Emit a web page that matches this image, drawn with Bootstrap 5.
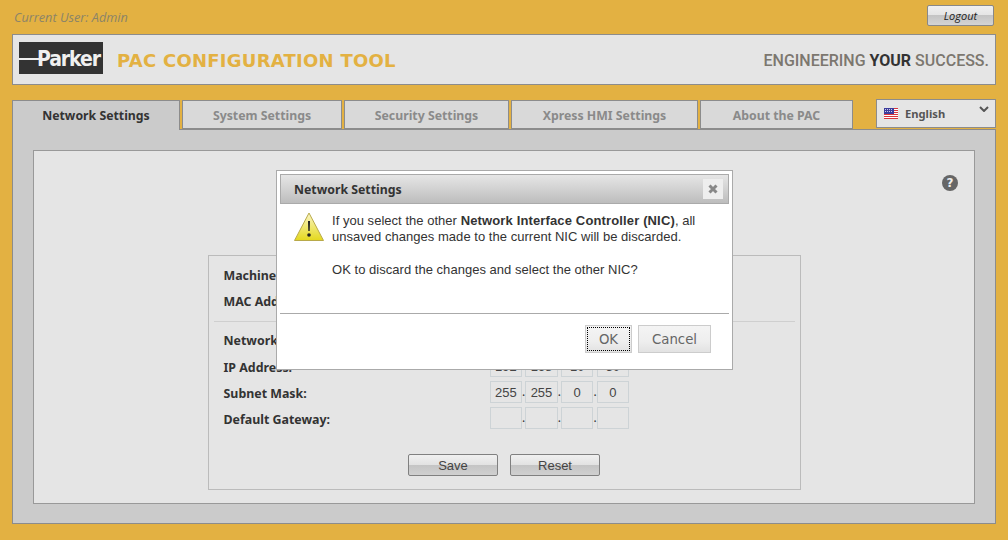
<!DOCTYPE html>
<html lang="en">
<head>
  <meta charset="UTF-8">
  <meta name="viewport" content="width=device-width, initial-scale=1.0">
  <title>PAC Configuration Tool</title>
  <link href="https://cdn.jsdelivr.net/npm/bootstrap@5.3.3/dist/css/bootstrap.min.css" rel="stylesheet">
  <script src="https://cdn.jsdelivr.net/npm/bootstrap@5.3.3/dist/js/bootstrap.bundle.min.js"></script>
  <style>
    html, body { height: 540px; overflow: hidden; }
    body {
      background: #e3b142;
      padding: 0 12px;
      font-family: "Liberation Sans", Arial, sans-serif;
      color: #333;
      position: relative;
    }
    .top-bar { height: 34px; padding: 5px 2px 0 2px; }
    .user-label { font: italic 12.700px "Open Sans", sans-serif; color: #8b8468; margin-top: 3px; }
    .logout-btn {
      width: 67px; height: 21px; padding: 0;
      font: italic 11px "Open Sans", sans-serif; color: #222;
      background: linear-gradient(#f0f0f0, #e4e4e4 50%, #c4c4c4 50%, #d4d4d4);
      border: 1px solid #888; border-radius: 2px;
    }
    .banner {
      height: 51px; background: #e5e5e5; border: 1px solid #8c8c8c;
      padding: 7px 6px 0 6px;
    }
    .parker-logo {
      width: 84px; height: 32px; background: #333; position: relative;
      color: #f0f0f0; font: bold 21px/35px "DejaVu Sans", sans-serif; font-stretch: condensed;
      letter-spacing: -1.1px; padding-left: 18px; overflow: hidden;
    }
    .parker-logo::before {
      content: ""; position: absolute; left: 0; top: 16px; width: 26px; height: 2px; background: #f0f0f0;
    }
    .tool-title {
      font: bold 18px "DejaVu Sans", sans-serif; color: #e3b142; margin-left: 14px; letter-spacing: .25px; padding-bottom: 6px;
    }
    .tagline {
      font: 500 16px Roboto, sans-serif; letter-spacing: 0; color: #7c776f; margin-left: auto; padding-bottom: 6px;
    }
    .tagline b { color: #333; font-weight: 700; }
    .tab-row { margin-top: 15px; height: 30px; position: relative; z-index: 1; }
    .tab-row .nav-link {
      height: 29px; padding: 0; text-align: center;
      background: #d9d9d9; color: #8a8a8a; border: 1px solid #8c8c8c; border-radius: 0;
      font: bold 12.300px/29px "Noto Sans", sans-serif; margin: 0;
    }
    .tab-row .nav-link.active { height: 30px; background: #cbcbcb; color: #333; border-bottom: 0; }
    .tab-1 { width: 168px; margin-right: 2px; }
    .tab-2 { width: 160px; margin-right: 2px; }
    .tab-3 { width: 165px; margin-right: 2px; }
    .tab-4 { width: 187px; margin-right: 2px; }
    .tab-5 { width: 153px; }
    .lang-box {
      margin-left: auto; margin-top: -1px; width: 120px; height: 29px; background: #e5e5e5; border: 1px solid #8c8c8c;
      padding: 0 7px; gap: 7px; font: bold 11.200px "Noto Sans", sans-serif; color: #555; position: relative;
    }
    .lang-caret { position: absolute; right: 6px; top: 6px; }
    .main-panel {
      margin-top: -1px; height: 395px; background: #cbcbcb; border: 1px solid #8c8c8c; padding: 20px;
    }
    .inner-panel { height: 354px; background: #e5e5e5; border: 1px solid #999; padding-top: 24px; }
    .help-row { padding-right: 16px; }
    .help-mark {
      width: 16px; height: 16px; background: #666; color: #eee; border-radius: 50%;
      font: bold 12px/16px "DejaVu Sans", sans-serif; text-align: center;
    }
    .settings-box {
      width: 593px; height: 235px; margin: 64px auto 0; border: 1px solid #bbb; padding: 5px 5px 0 5px;
    }
    .form-line { height: 26px; padding-left: 10px; font: bold 12.400px "Noto Sans", sans-serif; color: #333; }
    .form-line label { width: 266px; margin-top: 2px; }
    .box-rule { margin: 8px 0 4px; border: 0; border-top: 1px solid #cfcfcf; opacity: 1; }
    .nic-line { height: 27px; }
    .ip-octet {
      width: 32.600px; height: 22px; padding: 0; text-align: center; border: 1px solid #cdd3d6; border-radius: 0;
      background: #e5e5e5; font: 13px "Liberation Sans", sans-serif; color: #444;
    }
    .ip-dot { width: 3.100px; font-size: 12px; font-weight: normal; line-height: 30px; text-align: center; }
    .save-row { margin-top: 23px; gap: 12px; }
    .gray-btn {
      width: 90px; height: 22px; padding: 0; font: 13px "Liberation Sans", sans-serif; color: #444;
      background: linear-gradient(#f0f0f0, #e2e2e2 50%, #c4c4c4 50%, #d0d0d0);
      border: 1px solid #808080; border-radius: 2px;
    }
    .nic-dialog {
      position: absolute; left: 276px; top: 170px; width: 457px; height: 200px; background: #fff;
      border: 1px solid #aaa; border-radius: 0; padding: 3px; z-index: 5;
    }
    .nic-dialog .modal-header {
      height: 30px; padding: 0 5px 0 13px; border: 1px solid #aaa; border-radius: 0;
      background: linear-gradient(#e6e6e6, #bdbdbd);
      font: bold 12.300px "Noto Sans", sans-serif; color: #333;
    }
    .close-box { width: 20px; height: 20px; background: #eee; }
    .nic-dialog .modal-body {
      flex: none; height: 109px; padding: 9px 0 0 14px; gap: 8px;
      font: 13px/16.300px "Liberation Sans", sans-serif; letter-spacing: .03px; color: #333;
    }
    .nic-dialog .modal-body strong { letter-spacing: .14px; }
    .nic-dialog .modal-footer {
      padding: 11px 18px 0 0; border-top: 1px solid #aaa; border-radius: 0; gap: 6px; justify-content: flex-end;
    }
    .warn-icon { margin-top: -1px; }
    .dialog-btn {
      margin: 0; height: 28px; padding: 0; font: 13.300px "DejaVu Sans", sans-serif; color: #666; position: relative;
      background: linear-gradient(#f4f4f4, #eee 60%, #e2e2e2);
      border: 1px solid #ccc; border-radius: 0;
    }
    .ok-btn { width: 47px; }
    .ok-btn::after { content: ""; position: absolute; inset: 1px; border: 1px dotted #000; }
    .cancel-btn { width: 73px; }
  </style>
</head>
<body>
  <div class="top-bar d-flex justify-content-between align-items-start">
    <div class="user-label">Current User: Admin</div>
    <button class="btn logout-btn" type="button">Logout</button>
  </div>

  <div class="banner d-flex align-items-start">
    <div class="parker-logo">Parker</div>
    <div class="tool-title align-self-center">PAC CONFIGURATION TOOL</div>
    <div class="tagline align-self-center">ENGINEERING <b>YOUR</b> SUCCESS.</div>
  </div>

  <div class="tab-row d-flex align-items-start">
    <ul class="nav">
      <li class="nav-item tab-1"><a class="nav-link active" href="#">Network Settings</a></li>
      <li class="nav-item tab-2"><a class="nav-link" href="#">System Settings</a></li>
      <li class="nav-item tab-3"><a class="nav-link" href="#">Security Settings</a></li>
      <li class="nav-item tab-4"><a class="nav-link" href="#">Xpress HMI Settings</a></li>
      <li class="nav-item tab-5"><a class="nav-link" href="#">About the PAC</a></li>
    </ul>
    <div class="lang-box d-flex align-items-center">
      <svg width="14" height="11" viewBox="0 0 14 11">
        <rect width="14" height="11" fill="#fff"/>
        <path d="M0 .5h14M0 2.5h14M0 4.5h14M0 6.5h14M0 8.5h14M0 10.5h14" stroke="#d8343c" stroke-width="1"/>
        <rect width="10" height="6" fill="#3c3c9c"/>
        <path d="M1 1.500h8M1 3.500h8" stroke="#c8c8ea" stroke-width="1" stroke-dasharray="1 1"/>
      </svg>
      <span>English</span>
      <svg class="lang-caret" width="10" height="6" viewBox="0 0 10 6"><path d="M1 1l4 4 4-4" fill="none" stroke="#555" stroke-width="2"/></svg>
    </div>
  </div>

  <div class="main-panel">
    <div class="inner-panel">
      <div class="help-row d-flex justify-content-end"><div class="help-mark">?</div></div>
      <div class="settings-box">
        <div class="form-line d-flex align-items-center"><label>Machine Name:</label></div>
        <div class="form-line d-flex align-items-center"><label>MAC Address:</label></div>
        <hr class="box-rule">
        <div class="form-line nic-line d-flex align-items-center"><label>Network Interface:</label></div>
        <div class="form-line d-flex align-items-center">
          <label>IP Address:</label>
          <input class="form-control ip-octet" value="192"><span class="ip-dot">.</span>
          <input class="form-control ip-octet" value="168"><span class="ip-dot">.</span>
          <input class="form-control ip-octet" value="10"><span class="ip-dot">.</span>
          <input class="form-control ip-octet" value="50">
        </div>
        <div class="form-line d-flex align-items-center">
          <label>Subnet Mask:</label>
          <input class="form-control ip-octet" value="255"><span class="ip-dot">.</span>
          <input class="form-control ip-octet" value="255"><span class="ip-dot">.</span>
          <input class="form-control ip-octet" value="0"><span class="ip-dot">.</span>
          <input class="form-control ip-octet" value="0">
        </div>
        <div class="form-line d-flex align-items-center">
          <label>Default Gateway:</label>
          <input class="form-control ip-octet"><span class="ip-dot">.</span>
          <input class="form-control ip-octet"><span class="ip-dot">.</span>
          <input class="form-control ip-octet"><span class="ip-dot">.</span>
          <input class="form-control ip-octet">
        </div>
        <div class="save-row d-flex justify-content-center">
          <button class="btn gray-btn" type="button">Save</button>
          <button class="btn gray-btn" type="button">Reset</button>
        </div>
      </div>
    </div>
  </div>

  <div class="modal-content nic-dialog">
    <div class="modal-header d-flex justify-content-between">
      <span>Network Settings</span>
      <div class="close-box d-flex align-items-center justify-content-center">
        <svg width="10" height="10" viewBox="0 0 10 10"><path d="M1.500 1.500l7 7M8.500 1.500l-7 7" stroke="#888" stroke-width="3"/></svg>
      </div>
    </div>
    <div class="modal-body d-flex">
      <svg class="warn-icon flex-shrink-0" width="30" height="30" viewBox="0 0 30 30">
        <defs><linearGradient id="warnFill" x1="0" y1="0" x2="0" y2="1"><stop offset="0" stop-color="#fbf6c8"/><stop offset="1" stop-color="#e4d81c"/></linearGradient></defs>
        <path d="M15 1L29.500 28.500H.5z" fill="url(#warnFill)" stroke="#b8a94a" stroke-linejoin="round"/>
        <path d="M14 9h2l-.3 10h-1.400z" fill="#222"/>
        <circle cx="15" cy="23" r="1.800" fill="#222"/>
      </svg>
      <div>
        If you select the other <strong>Network Interface Controller (NIC)</strong>, all<br>
        unsaved changes made to the current NIC will be discarded.<br><br>
        OK to discard the changes and select the other NIC?
      </div>
    </div>
    <div class="modal-footer">
      <button class="btn dialog-btn ok-btn" type="button">OK</button>
      <button class="btn dialog-btn cancel-btn" type="button">Cancel</button>
    </div>
  </div>
</body>
</html>
